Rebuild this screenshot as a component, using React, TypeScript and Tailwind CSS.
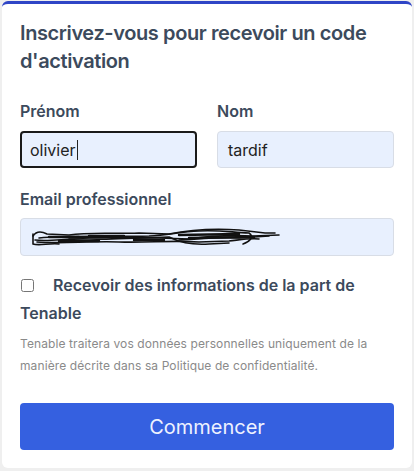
import React from 'react';

const font = { fontFamily: 'Inter, Roboto, "Liberation Sans", sans-serif' };

export default function App() {
    return (
        <div className="w-[414px] h-[471px] bg-[#efefef] pt-[1px] px-[2px] pb-[3px]" style={font}>
            <div className="h-full bg-white rounded-[6px] border-t-[3px] border-[#2f45c6] px-[18px] pt-[15px]">
                <h1 className="text-[20px] leading-[28px] font-semibold text-[#3c4a5c] tracking-[-0.4px]">
                    Inscrivez-vous pour recevoir un code d'activation
                </h1>

                <div className="mt-[26px] grid grid-cols-2 gap-x-[20px]">
                    <div>
                        <label className="block text-[16px] font-semibold text-[#3c4a5c] leading-[20px]">Prénom</label>
                        <div className="mt-[10px] h-[37px] rounded-[4px] bg-[#e8f0fe] border-2 border-[#1a1a1a] flex items-center px-[8px] text-[16px] text-[#222]">
                            olivier<span className="w-[1px] h-[20px] bg-[#222] ml-[1px]" />
                        </div>
                    </div>
                    <div>
                        <label className="block text-[16px] font-semibold text-[#3c4a5c] leading-[20px]">Nom</label>
                        <div className="mt-[10px] h-[37px] rounded-[4px] bg-[#e8f0fe] border border-[#d8dde6] flex items-center px-[10px] text-[16px] text-[#222]">
                            tardif
                        </div>
                    </div>
                </div>

                <label className="block mt-[21px] text-[16px] font-semibold text-[#3c4a5c] leading-[20px]">Email professionnel</label>
                <div className="mt-[9px] h-[38px] rounded-[4px] bg-[#e8f0fe] border border-[#d8dde6] flex items-center px-[8px]">
                    <svg width="252" height="26" viewBox="0 0 252 26" fill="none" stroke="#111" strokeWidth="1.6" strokeLinecap="round">
                        <path d="M4 12 C8 6 14 8 18 10 L40 11 C60 8 80 10 110 9 L140 10 C160 6 180 4 210 6 L236 9 L246 9" />
                        <path d="M6 16 C20 18 40 14 60 15 C80 16 100 13 130 14 L160 15 C180 12 200 11 224 12 L250 11" />
                        <path d="M8 18 C30 20 60 17 90 18 C120 19 140 16 170 18 L200 17 C210 16 220 14 230 15" />
                        <path d="M4 10 L4 20 C10 22 20 19 30 20 M40 14 C70 12 100 15 140 13 C150 18 160 21 180 20 L200 19" />
                        <path d="M10 14 C40 11 80 13 120 12 C140 11 150 8 170 7 C190 6 200 8 220 9 C226 13 220 18 214 20" />
                        <path d="M150 16 C170 15 190 13 210 14 L240 12" />
                        <path d="M20 13 L50 13 M60 12 L95 12 M105 16 L135 16 M30 17 L70 17" strokeWidth="2.4" />
                        <path d="M150 11 L210 10 M160 14 L225 13" strokeWidth="2.4" />
                    </svg>
                </div>

                <div className="mt-[15px] text-[16px] font-semibold text-[#3c4a5c] leading-[28px]">
                    <input type="checkbox" className="w-[13px] h-[13px] align-[-1px] mr-[19px] ml-[1px] accent-[#555]" />
                    Recevoir des informations de la part de Tenable
                </div>

                <p className="mt-[6px] text-[12px] leading-[22px] text-[#8a8a8a] tracking-[0.1px]">
                    Tenable traitera vos données personnelles uniquement de la manière décrite dans sa Politique de confidentialité.
                </p>

                <button className="mt-[26px] w-full h-[47px] rounded-[4px] bg-[#3560e0] text-[#eef2ff] text-[20px] font-normal">
                    Commencer
                </button>
            </div>
        </div>
    );
}
